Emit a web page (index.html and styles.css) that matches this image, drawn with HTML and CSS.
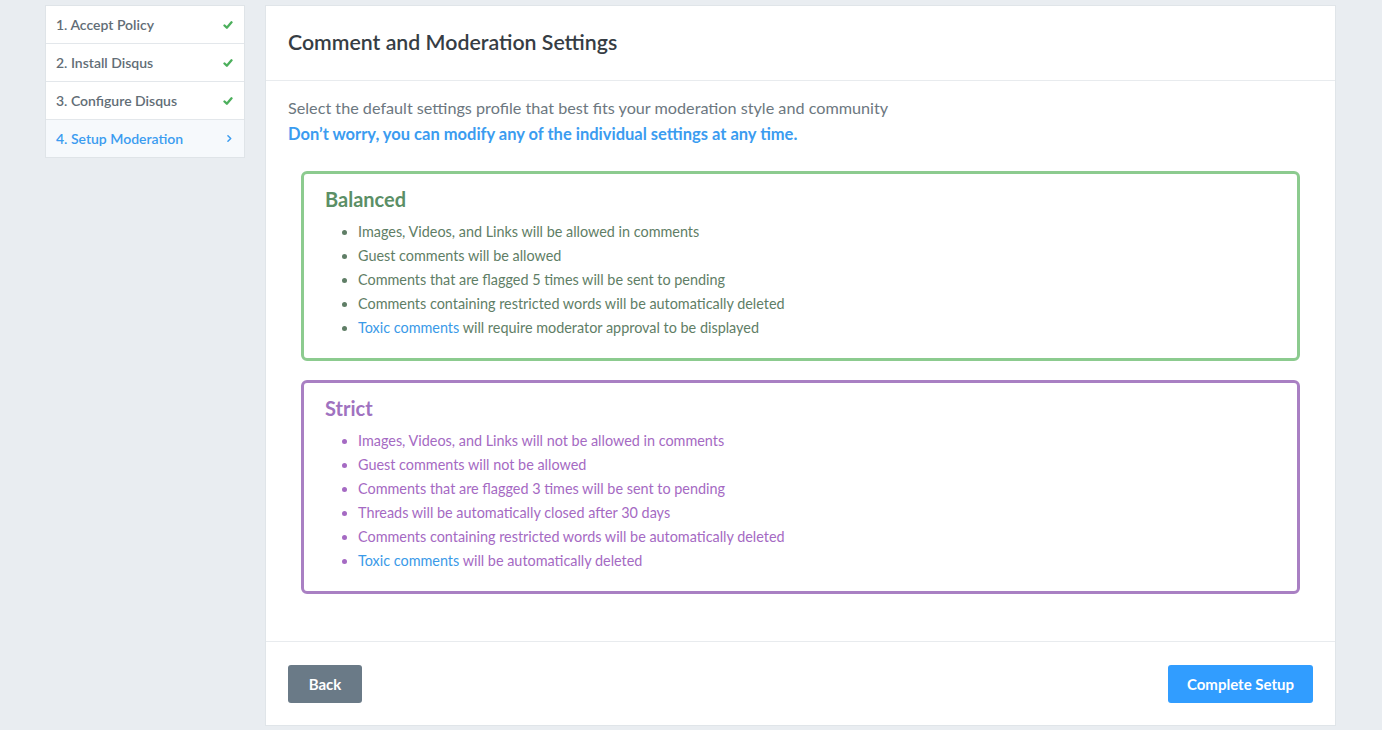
FILE: index.html
```html
<!DOCTYPE html>
<html lang="en">
<head>
<meta charset="utf-8">
<title>Setup Moderation</title>
<link rel="stylesheet" href="styles.css">
</head>
<body>
<div class="page">
  <nav class="steps">
    <div class="step done"><span>1. Accept Policy</span><svg class="check" viewBox="0 0 12 12" width="10" height="10"><path d="M1.8 6.6 L4.6 9.2 L10.2 2.8" fill="none" stroke="#4caf5c" stroke-width="2.8" stroke-linecap="round" stroke-linejoin="round"/></svg></div>
    <div class="step done"><span>2. Install Disqus</span><svg class="check" viewBox="0 0 12 12" width="10" height="10"><path d="M1.8 6.6 L4.6 9.2 L10.2 2.8" fill="none" stroke="#4caf5c" stroke-width="2.8" stroke-linecap="round" stroke-linejoin="round"/></svg></div>
    <div class="step done"><span>3. Configure Disqus</span><svg class="check" viewBox="0 0 12 12" width="10" height="10"><path d="M1.8 6.6 L4.6 9.2 L10.2 2.8" fill="none" stroke="#4caf5c" stroke-width="2.8" stroke-linecap="round" stroke-linejoin="round"/></svg></div>
    <div class="step active"><span>4. Setup Moderation</span><svg class="chev" viewBox="0 0 8 10" width="7" height="9"><path d="M2.2 1.8 L5.4 5 L2.2 8.2" fill="none" stroke="#3b9cf0" stroke-width="1.7" stroke-linecap="round" stroke-linejoin="round"/></svg></div>
  </nav>
  <main class="card">
    <header class="card-head">
      <h1>Comment and Moderation Settings</h1>
    </header>
    <section class="card-body">
      <p class="intro">Select the default settings profile that best fits your moderation style and community</p>
      <p class="note">Don’t worry, you can modify any of the individual settings at any time.</p>
      <div class="profile balanced">
        <h2>Balanced</h2>
        <ul>
          <li>Images, Videos, and Links will be allowed in comments</li>
          <li>Guest comments will be allowed</li>
          <li>Comments that are flagged 5 times will be sent to pending</li>
          <li>Comments containing restricted words will be automatically deleted</li>
          <li><a class="link">Toxic comments</a> will require moderator approval to be displayed</li>
        </ul>
      </div>
      <div class="profile strict">
        <h2>Strict</h2>
        <ul>
          <li>Images, Videos, and Links will not be allowed in comments</li>
          <li>Guest comments will not be allowed</li>
          <li>Comments that are flagged 3 times will be sent to pending</li>
          <li>Threads will be automatically closed after 30 days</li>
          <li>Comments containing restricted words will be automatically deleted</li>
          <li><a class="link">Toxic comments</a> will be automatically deleted</li>
        </ul>
      </div>
    </section>
    <footer class="card-foot">
      <button class="btn btn-back">Back</button>
      <button class="btn btn-primary">Complete Setup</button>
    </footer>
  </main>
</div>
</body>
</html>
```
FILE: styles.css
```css
* { box-sizing: border-box; }
html, body { margin: 0; padding: 0; }
body {
  background: #e9edf1;
  font-family: Lato, "Open Sans", sans-serif;
  color: #5f6b75;
}
.page {
  display: flex;
  align-items: flex-start;
  gap: 20px;
  padding: 5px 45px 4px 45px;
}
.steps {
  width: 200px;
  flex: none;
  background: #fff;
  border: 1px solid #dfe4e8;
}
.step {
  height: 38px;
  display: flex;
  align-items: center;
  justify-content: space-between;
  padding: 0 11px 0 10px;
  font-size: 14px;
  font-weight: 600;
  color: #626d76;
  border-top: 1px solid #e3e7eb;
}
.step:first-child { border-top: none; height: 37px; }
.step.active {
  background: #f6f9fc;
  color: #3b9cf0;
}
.card {
  width: 1071px;
  flex: none;
  background: #fff;
  border: 1px solid #e0e5e9;
  height: 721px;
  display: flex;
  flex-direction: column;
}
.card-head {
  flex: none;
  height: 75px;
  display: flex;
  align-items: center;
  padding: 0 22px 3px;
  border-bottom: 1px solid #e8ebee;
}
.card-head h1 {
  margin: 0;
  font-size: 21.3px;
  font-weight: 600;
  color: #363d44;
}
.card-body {
  flex: 1 1 auto;
  padding: 14px 22px 0;
}
.intro, .note {
  margin: 0;
  font-size: 16.2px;
  line-height: 25px;
}
.intro { color: #6c7780; }
.note { color: #3b9cf0; font-weight: 700; font-size: 16.5px; margin-top: 2px; }
.profile {
  margin: 24px 13px 0;
  border: 3px solid;
  border-radius: 6px;
  padding: 13px 21px 18px;
}
.profile + .profile { margin-top: 19px; }
.profile h2 {
  margin: 0 0 9px;
  font-size: 20px;
  line-height: 24px;
  font-weight: 700;
}
.profile ul {
  margin: 0;
  padding: 0 0 0 33px;
  font-size: 14.4px;
  line-height: 24px;
}
.balanced { border-color: #8ccb8f; }
.balanced h2 { color: #5b8f66; }
.balanced ul { color: #5f7e66; }
.strict { border-color: #a980c3; }
.strict h2 { color: #a072c0; }
.strict ul { color: #a56ac3; }
.link { color: #3a9ae8; }
.card-foot {
  flex: none;
  border-top: 1px solid #e8ebee;
  display: flex;
  justify-content: space-between;
  padding: 23px 22px 22px;
}
.btn {
  height: 38px;
  border: none;
  border-radius: 3px;
  color: #fff;
  font-family: Lato, "Open Sans", sans-serif;
  font-size: 15px;
  font-weight: 700;
  cursor: pointer;
}
.btn-back { width: 74px; background: #6a7a87; }
.btn-primary { width: 145px; background: #319dff; }
```
